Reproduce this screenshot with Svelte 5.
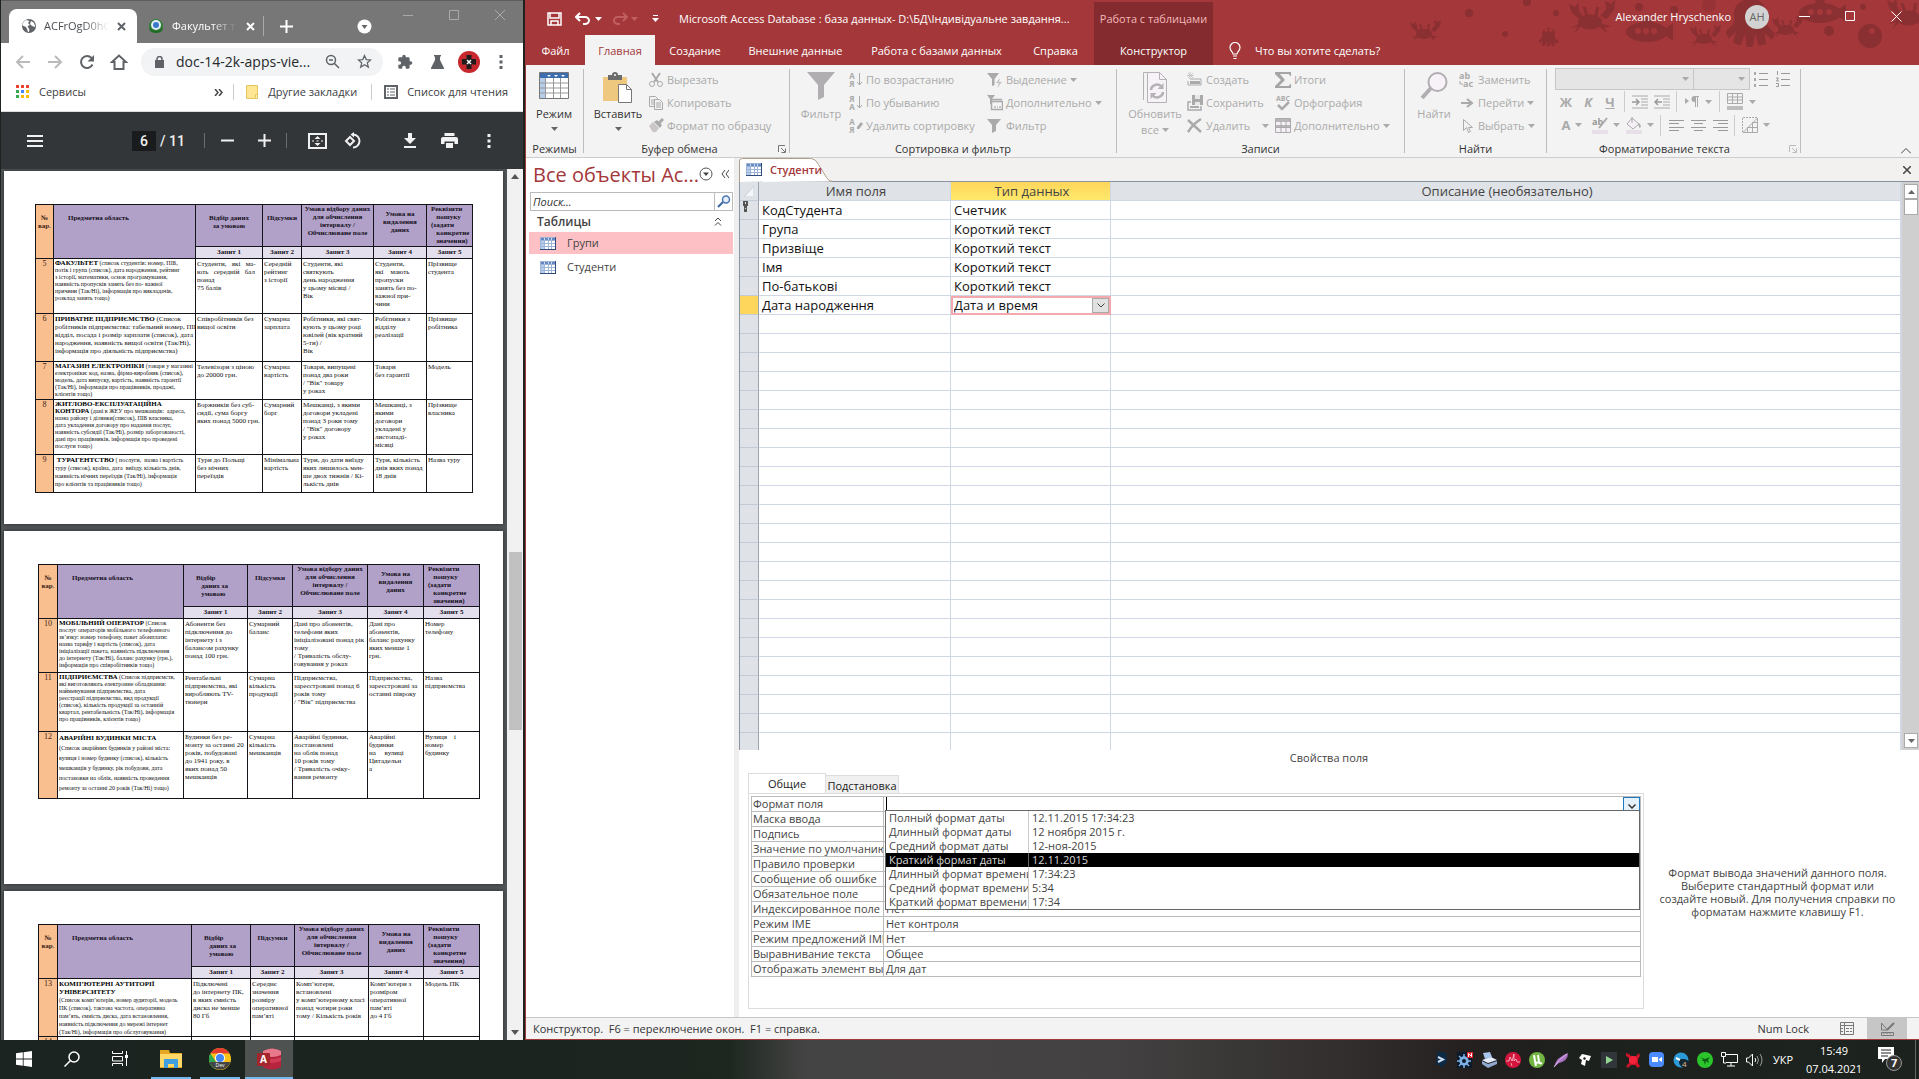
<script>
  const heads = [
    { a: ['Відбір даних', 'за умовою'], left: false },
    { a: ['Відбір', '   даних за', '   умовою'], left: true }
  ];
  const requisites = ['Реквізити', '   пошуку', '(задати', '   конкретне', '   значення)'];

  const pages = [
    {
      cols: [18, 142, 67, 39, 72, 53, 46],
      head: heads[0],
      rows: [
        {
          n: '5', h: 55, pitch: 'p7', title: 'ФАКУЛЬТЕТ', first: '(список студентів: номер, ПІБ,',
          desc: ['потік і група (список), дата народження, рейтинг', 'з історії, математики, основ програмування,', 'наявність пропусків занять без по- важної', 'причини (Так/Ні), інформація про викладачів,', 'розклад занять тощо)'],
          cells: [['Студенти,   які   ма-', 'ють   середній   бал', 'понад', '75 балів'], ['Середній', 'рейтинг', 'з історії'], ['Студенти, які', 'святкують', 'день народження', 'у цьому місяці /', 'Вік'], ['Студенти,', 'які    мають', 'пропуски', 'занять без по-', 'важної при-', 'чини'], ['Прізвище', 'студента']]
        },
        {
          n: '6', h: 48, pitch: 'p8', title: 'ПРИВАТНЕ ПІДПРИЄМСТВО', first: '(Список',
          desc: ['робітників підприємства: табельний номер, ПІБ,', 'відділ, посада і розмір зарплати (список), дата', 'народження, наявність вищої освіти (Так/Ні),', 'інформація про діяльність підприємства)'],
          cells: [['Співробітників без', 'вищої освіти'], ['Сумарна', 'зарплата'], ['Робітники, які свят-', 'кують у цьому році', 'ювілей (вік кратний', '5-ти) /', 'Вік'], ['Робітники з', 'відділу', 'реалізації'], ['Прізвище', 'робітника']]
        },
        {
          n: '7', h: 38, pitch: 'p7', title: 'МАГАЗИН ЕЛЕКТРОНІКИ', first: '(товари у магазині',
          desc: ['електроніки: код, назва, фірма-виробник (список),', 'модель, дата випуску, вартість, наявність гарантії', '(Так/Ні), інформація про працівників, продажі,', 'клієнтів тощо)'],
          cells: [['Телевізори з ціною', 'до 20000 грн.'], ['Сумарна', 'вартість'], ['Товари, випущені', 'понад два роки', '/ "Вік" товару', 'у роках'], ['Товари', 'без гарантії'], ['Модель']]
        },
        {
          n: '8', h: 55, pitch: 'p7', title: 'ЖИТЛОВО-ЕКСПЛУАТАЦІЙНА', first: '', title2: 'КОНТОРА', first2: '(дані в ЖЕУ про мешканців:  адреса,',
          desc: ['назва району і ділянки(список), ПІБ власника,', 'дата укладення договору про надання послуг,', 'наявність субсидії (Так/Ні), розмір заборгованості,', 'дані про працівників, інформація про проведені', 'послуги тощо)'],
          cells: [['Боржників без суб-', 'сидії, сума боргу', 'яких понад 5000 грн.'], ['Сумарний', 'борг'], ['Мешканці, з якими', 'договори укладені', 'понад 3 роки тому', '/ "Вік" договору', 'у роках'], ['Мешканці, з', 'якими', 'договори', 'укладені у', 'листопаді-', 'місяці'], ['Прізвище', 'власника']]
        },
        {
          n: '9', h: 38, pitch: 'p8', small: true, title: ' ТУРАГЕНТСТВО', first: '( послуги,  назва і вартість',
          desc: ['туру (список), країна, дата  виїзду, кількість днів,', 'наявність нічних переїздів (Так/Ні), інформація', 'про клієнтів та працівників тощо)'],
          cells: [['Тури до Польщі', 'без нічних', 'переїздів'], ['Мінімальна', 'вартість'], ['Тури, до дати виїзду', 'яких лишилось мен-', 'ше двох тижнів / Кі-', 'лькість днів'], ['Тури, кількість', 'днів яких понад', '18 днів'], ['Назва туру']]
        }
      ]
    },
    {
      cols: [19, 126, 64, 45, 75, 56, 56],
      head: heads[1],
      rows: [
        {
          n: '10', h: 54, pitch: 'p7', title: 'МОБІЛЬНИЙ ОПЕРАТОР', first: '(Список',
          desc: ['послуг операторів мобільного телефонного', 'зв’язку: номер телефону, пакет абонплати:', 'назва тарифу і вартість (список), дата', 'ініціалізації пакета, наявність підключення', 'до інтернету (Так/Ні), баланс рахунку (грн.),', 'інформація про співробітників тощо)'],
          cells: [['Абоненти без', 'підключення до', 'інтернету і з', 'балансом рахунку', 'понад 100 грн.'], ['Сумарний', 'баланс'], ['Дані про абонентів,', 'телефони яких', 'ініціалізовані понад рік', 'тому', '/ Тривалість обслу-', 'говування у роках'], ['Дані про', 'абонентів,', 'баланс рахунку', 'яких менше 1', 'грн.'], ['Номер', 'телефону']]
        },
        {
          n: '11', h: 59, pitch: 'p7', title: 'ПІДПРИЄМСТВА', first: '(Список підприємств,',
          desc: ['які виготовляють електронне обладнання:', 'найменування підприємства, дата', 'реєстрації підприємства, вид продукції', '(список), кількість продукції за останній', 'квартал, рентабельність (Так/Ні), інформація', 'про працівників, клієнтів тощо)'],
          cells: [['Рентабельні', 'підприємства, які', 'виробляють TV-', 'тюнери'], ['Сумарна', 'кількість', 'продукції'], ['Підприємства,', 'зареєстровані понад 6', 'років тому', '/ "Вік" підприємства'], ['Підприємства,', 'зареєстровані за', 'останні півроку'], ['Назва', 'підприємства']]
        },
        {
          n: '12', h: 67, pitch: 'p9', title: 'АВАРІЙНІ БУДИНКИ МІСТА', first: '',
          desc: ['(Список аварійних будинків у районі міста:', 'вулиця і номер будинку (список), кількість', 'мешканців у будинку, рік побудови, дата', 'постановки на облік, наявність проведення', 'ремонту за останні 20 років (Так/Ні) тощо)'],
          cells: [['Будинки без ре-', 'монту за останні 20', 'років, побудовані', 'до 1941 року, в', 'яких понад 50', 'мешканців'], ['Сумарна', 'кількість', 'мешканців'], ['Аварійні будинки,', 'постановлені', 'на облік понад', '10 років тому', '/ Тривалість очіку-', 'вання ремонту'], ['Аварійні', 'будинки', 'на     вулиці', 'Цитадельн', 'а'], ['Вулиця    і', 'номер', 'будинку']]
        }
      ]
    },
    {
      cols: [19, 134, 59, 44, 74, 55, 56],
      head: heads[1],
      rows: [
        {
          n: '13', h: 58, pitch: 'p8', small: true, title: 'КОМП’ЮТЕРНІ АУТИТОРІЇ', first: '', title2: 'УНІВЕРСИТЕТУ', first2: '',
          desc: ['(Список комп’ютерів, номер аудиторії, модель', 'ПК (список), тактова частота, оперативна', 'пам’ять, ємність диска, дата встановлення,', 'наявність підключення до мережі інтернет', '(Так/Ні), інформація про обслуговування)'],
          cells: [['Підключені', 'до інтернету ПК,', 'в яких ємність', 'диска не менше', '80 Гб'], ['Середнє', 'значення', 'розміру', 'оперативної', 'пам’яті'], ['Комп’ютери,', 'встановлені', 'у комп’ютерному класі', 'понад чотири роки', 'тому / Кількість років'], ['Комп’ютери з', 'розміром', 'оперативної', 'пам’яті', 'до 4 Гб'], ['Модель ПК']]
        },
        { n: '14', h: 50, pitch: 'p8', title: 'БІБЛІОТЕКА', first: '(Список книг,', desc: [], cells: [['Книги, які'], ['Середня'], ['Книги, видані'], ['Книги, які'], ['Назва']] }
      ]
    }
  ];

  const fields = [
    ['КодСтудента', 'Счетчик'],
    ['Група', 'Короткий текст'],
    ['Призвіще', 'Короткий текст'],
    ['Імя', 'Короткий текст'],
    ['По-батькові', 'Короткий текст'],
    ['Дата народження', 'Дата и время']
  ];
  const blanks = Array.from({ length: 24 });

  const props = [
    ['Маска ввода', ''],
    ['Подпись', ''],
    ['Значение по умолчанию', ''],
    ['Правило проверки', ''],
    ['Сообщение об ошибке', ''],
    ['Обязательное поле', 'Нет'],
    ['Индексированное поле', 'Нет'],
    ['Режим IME', 'Нет контроля'],
    ['Режим предложений IME', 'Нет'],
    ['Выравнивание текста', 'Общее'],
    ['Отображать элемент выбора', 'Для дат']
  ];
  const formats = [
    ['Полный формат даты', '12.11.2015 17:34:23'],
    ['Длинный формат даты', '12 ноября 2015 г.'],
    ['Средний формат даты', '12-ноя-2015'],
    ['Краткий формат даты', '12.11.2015'],
    ['Длинный формат времени', '17:34:23'],
    ['Средний формат времени', '5:34'],
    ['Краткий формат времени', '17:34']
  ];
  let chosen = $state(3);
  let typeValue = $state('Дата и время');
</script>

{#snippet caret()}
  <svg class="caret" width="7" height="4" viewBox="0 0 7 4"><path d="M0 0h7L3.500 4z" fill="currentColor" /></svg>
{/snippet}

{#snippet sheet()}
  <svg width="16" height="13" viewBox="0 0 16 13">
    <path d="M0 0h15v12H0z" fill="#9db4d6" />
    <path d="M15 0h1v13H0v-1h15z" fill="#2f4c7c" />
    <path d="M1 1h14v2H1z" fill="#6488c4" />
    <path d="M1 4h3v2H1zM1 7h3v2H1zM1 10h3v2H1z" fill="#b9cdec" />
    <path d="M5 4h3v2H5zM9 4h2v2H9zM12 4h3v2h-3zM5 7h3v2H5zM9 7h2v2H9zM12 7h3v2h-3zM5 10h3v2H5zM9 10h2v2H9zM12 10h3v2h-3z" fill="#fff" />
    <path d="M4 1h1v2H4zM8 1h1v2H8zM11 1h1v2h-1z" fill="#cfdcf2" />
  </svg>
{/snippet}

{#snippet docTable(p)}
  <table class="doc">
    <colgroup>{#each p.cols as w}<col style:width="{w}px" />{/each}</colgroup>
    <thead>
      <tr class="h1">
        <th rowspan="2" class="num low">№<br />вар.</th>
        <th rowspan="2" class="subj low">Предметна область</th>
        <th class="low" class:left={p.head.left}>{#each p.head.a as l}<span class="ln">{l}</span>{/each}</th>
        <th class="low">Підсумки</th>
        <th>Умова відбору даних<br />для обчислення<br />інтервалу /<br />Обчислюване поле</th>
        <th class="mid">Умова на<br />видалення<br />даних</th>
        <th class="left">{#each requisites as l}<span class="ln">{l}</span>{/each}</th>
      </tr>
      <tr class="h2">{#each [1, 2, 3, 4, 5] as q}<th>Запит {q}</th>{/each}</tr>
    </thead>
    <tbody>
      {#each p.rows as r}
        <tr style:height="{r.h}px">
          <td class="num">{r.n}</td>
          <td class="desc {r.pitch}" class:small={r.small}>
            <span class="ln"><b>{r.title}</b> {r.first}</span>
            {#if r.title2}<span class="ln"><b>{r.title2}</b> {r.first2}</span>{/if}
            {#each r.desc as l}<span class="ln">{l}</span>{/each}
          </td>
          {#each r.cells as c}<td>{#each c as l}<span class="ln">{l}</span>{/each}</td>{/each}
        </tr>
      {/each}
    </tbody>
  </table>
{/snippet}

<div class="desktop">
  <!-- Browser -->
  <section class="browser">
    <div class="tabstrip">
      <div class="tab on">
        <svg width="16" height="16" viewBox="0 0 16 16"><circle cx="8" cy="8" r="7" fill="#5f6368" /><path d="M5 2c-2 1-3.500 3-3.500 5.500L5 9l1 2 1 3c1 .5 1-1 1.500-2L6.500 8 9 7 7 5l1.500-2zM10 3l-1 3 2 2 3 1c0-3-1-5-4-6z" fill="#fff" /></svg>
        <span class="ttl">ACFrOgD0hQ</span>
        <button aria-label="Закрыть вкладку"><svg width="9" height="9" viewBox="0 0 9 9"><path d="M1 1l7 7M8 1L1 8" stroke="#5f6368" stroke-width="2" /></svg></button>
      </div>
      <div class="tab off">
        <svg width="16" height="16" viewBox="0 0 16 16"><circle cx="8" cy="8" r="7" fill="#2e7d32" /><circle cx="8" cy="7" r="5" fill="#e3eefb" /><circle cx="8" cy="7" r="3" fill="#3c78c8" /><path d="M1 10q7 6 14 0l-1 3q-6 4-12 0z" fill="#1f6a26" /></svg>
        <span class="ttl">Факультет т</span>
        <button aria-label="Закрыть вкладку"><svg width="9" height="9" viewBox="0 0 9 9"><path d="M1 1l7 7M8 1L1 8" stroke="#fff" stroke-width="2" /></svg></button>
      </div>
      <button class="plus" aria-label="Новая вкладка"><svg width="13" height="13" viewBox="0 0 13 13"><path d="M6.500 0v13M0 6.500h13" stroke="#fff" stroke-width="2" /></svg></button>
      <button class="media" aria-label="Поиск вкладок"><svg width="15" height="15" viewBox="0 0 15 15"><circle cx="7.500" cy="7.500" r="7" fill="#fff" /><path d="M4.500 6h6l-3 4z" fill="#666" /></svg></button>
      <div class="wins">
        <button aria-label="Свернуть"><svg width="11" height="11" viewBox="0 0 11 11"><path d="M0 5.500h10" stroke="#aaa" /></svg></button>
        <button aria-label="Развернуть"><svg width="11" height="11" viewBox="0 0 11 11"><path d="M.5.500h9v9h-9z" stroke="#aaa" fill="none" /></svg></button>
        <button aria-label="Закрыть"><svg width="11" height="11" viewBox="0 0 11 11"><path d="M0 0l10 10M10 0L0 10" stroke="#aaa" /></svg></button>
      </div>
    </div>

    <div class="navbar">
      <button aria-label="Назад"><svg width="16" height="16" viewBox="0 0 16 16"><path d="M15 8H2M8 2L2 8l6 6" stroke="#bbb" stroke-width="2" fill="none" /></svg></button>
      <button aria-label="Вперёд"><svg width="16" height="16" viewBox="0 0 16 16"><path d="M1 8h13M8 2l6 6-6 6" stroke="#bbb" stroke-width="2" fill="none" /></svg></button>
      <button aria-label="Обновить"><svg width="16" height="16" viewBox="0 0 16 16"><path d="M13.500 10.500A6 6 0 1 1 12.500 4" stroke="#5f6368" stroke-width="2" fill="none" /><path d="M15 1v6.500H8.500z" fill="#5f6368" /></svg></button>
      <button aria-label="Домой"><svg width="18" height="16" viewBox="0 0 18 16"><path d="M2 8l7-6.500L16 8h-2.500v7h-9V8z" stroke="#5f6368" stroke-width="2" fill="none" /></svg></button>
      <div class="omni">
        <svg width="9" height="12" viewBox="0 0 9 12"><path d="M0 4h9v8H0z" fill="#5f6368" /><path d="M2 5V3a2.500 2.500 0 0 1 5 0v2" stroke="#5f6368" stroke-width="1.500" fill="none" /></svg>
        <input aria-label="Адрес" value="doc-14-2k-apps-vie..." />
        <svg width="15" height="15" viewBox="0 0 15 15"><circle cx="6" cy="6" r="4.500" stroke="#5f6368" stroke-width="1.500" fill="none" /><path d="M4 6h4M9.500 9.500L14 14" stroke="#5f6368" stroke-width="1.500" /></svg>
        <svg width="15" height="15" viewBox="0 0 24 24"><path d="M12 2.500l2.800 6.400 7 .6-5.300 4.600 1.600 6.900-6.100-3.700L5.900 21l1.600-6.900L2.200 9.500l7-.6z" stroke="#5f6368" stroke-width="2" fill="none" /></svg>
      </div>
      <button class="ext" aria-label="Расширения"><svg width="16" height="16" viewBox="0 0 24 24"><path d="M20.500 11H19V7a2 2 0 0 0-2-2h-4V3.500a2.500 2.500 0 0 0-5 0V5H4a2 2 0 0 0-2 2v3.800h1.500a2.700 2.700 0 0 1 0 5.400H2V20a2 2 0 0 0 2 2h3.800v-1.500a2.700 2.700 0 0 1 5.400 0V22H17a2 2 0 0 0 2-2v-4h1.500a2.500 2.500 0 0 0 0-5z" fill="#5f6368" /></svg></button>
      <button aria-label="Эксперименты"><svg width="13" height="14" viewBox="0 0 13 14"><path d="M3 0h7v1.500H9V5l4 8v1H0v-1l4-8V1.500H3z" fill="#5f6368" /></svg></button>
      <button aria-label="Профиль"><svg width="22" height="22" viewBox="0 0 22 22"><circle cx="11" cy="11" r="11" fill="#c6282e" /><path d="M8.500 4h5v4H18v5.500h-4.500V18h-5v-4.500H4V8h4.500z" fill="#221b1c" /><path d="M9 9l4 4M13 9l-4 4" stroke="#fff" stroke-width="1.500" /></svg></button>
      <button aria-label="Меню"><svg width="4" height="14" viewBox="0 0 4 14"><path d="M.5 0h3v3h-3zM.5 5.500h3v3h-3zM.5 11h3v3h-3z" fill="#5f6368" /></svg></button>
    </div>

    <div class="marks">
      <a href="#apps"><svg width="14" height="14" viewBox="0 0 14 14"><path d="M0 0h3v3H0zM5 0h3v3H5zM10 0h3v3h-3z" fill="#ea4335" /><path d="M0 5h3v3H0zM0 10h3v3H0z" fill="#34a853" /><path d="M5 5h3v3H5z" fill="#4285f4" /><path d="M10 5h3v3h-3zM5 10h3v3H5zM10 10h3v3h-3z" fill="#fbbc05" /></svg>Сервисы</a>
      <button class="more" aria-label="Ещё закладки"><svg width="9" height="7" viewBox="0 0 9 7"><path d="M1 0l3 3.500L1 7M5 0l3 3.500L5 7" stroke="#444" stroke-width="1.500" fill="none" /></svg></button>
      <i></i>
      <a class="other" href="#other"><svg width="13" height="14" viewBox="0 0 13 14"><path d="M.5.500h11v13H.5z" fill="#ffe694" stroke="#e8c55a" /><path d="M9.500 9.500h2v4h-2z" fill="#fff3c4" stroke="#e8c55a" /></svg>Другие закладки</a>
      <i></i>
      <a href="#reading"><svg width="14" height="14" viewBox="0 0 14 14"><path d="M1 1h12v12H1z" stroke="#5f6368" stroke-width="2" fill="none" /><path d="M3 4h2M6 4h5M3 7h2M6 7h5M3 10h2M6 10h5" stroke="#5f6368" /></svg>Список для чтения</a>
    </div>

    <div class="pdfbar">
      <button aria-label="Оглавление"><svg width="16" height="12" viewBox="0 0 16 12"><path d="M0 1h16M0 6h16M0 11h16" stroke="#f1f1f1" stroke-width="2" /></svg></button>
      <label class="pg"><input aria-label="Страница" value="6" /><span>/ 11</span></label>
      <i></i>
      <button aria-label="Уменьшить"><svg width="13" height="13" viewBox="0 0 13 13"><path d="M0 6.500h13" stroke="#f1f1f1" stroke-width="2" /></svg></button>
      <button class="zin" aria-label="Увеличить"><svg width="13" height="13" viewBox="0 0 13 13"><path d="M0 6.500h13M6.500 0v13" stroke="#f1f1f1" stroke-width="2" /></svg></button>
      <i></i>
      <button class="fit" aria-label="По размеру"><svg width="19" height="16" viewBox="0 0 19 16"><path d="M1 1h17v14H1z" stroke="#f1f1f1" stroke-width="2" fill="none" /><path d="M9.500 3l3 3h-6zM9.500 13l3-3h-6zM4 7.500h2v1H4zM13 7.500h2v1h-2zM8.500 7.500h2v1h-2z" fill="#f1f1f1" /></svg></button>
      <button class="rot" aria-label="Повернуть"><svg width="18" height="18" viewBox="0 0 18 18"><path d="M6 5l4 4-4 4-4-4z" stroke="#f1f1f1" stroke-width="2" fill="none" /><path d="M9 2.500a6.500 6.500 0 1 1 0 13" stroke="#f1f1f1" stroke-width="2" fill="none" /><path d="M10 0v5.500L6.500 2.500z" fill="#f1f1f1" /></svg></button>
      <button class="dl" aria-label="Скачать"><svg width="12" height="15" viewBox="0 0 12 15"><path d="M4 0h4v5h4l-6 6-6-6h4zM0 13h12v2H0z" fill="#f1f1f1" /></svg></button>
      <button aria-label="Печать"><svg width="17" height="15" viewBox="0 0 17 15"><path d="M3.500 0h10v3h-10zM2 4h13q2 0 2 2v5h-3.500V8.500h-10V11H0V6q0-2 2-2zM5 10h7v5H5z" fill="#f1f1f1" /></svg></button>
      <button aria-label="Ещё"><svg width="4" height="14" viewBox="0 0 4 14"><path d="M.5 0h3v3h-3zM.5 5.500h3v3h-3zM.5 11h3v3h-3z" fill="#f1f1f1" /></svg></button>
    </div>

    <div class="viewer">
      <div class="pages">
        {#each pages as p, i}
          <article class="page" class:first={i === 0}>{@render docTable(p)}</article>
        {/each}
      </div>
      <div class="vbar">
        <svg width="8" height="5" viewBox="0 0 8 5"><path d="M4 0l4 5H0z" fill="#555" /></svg>
        <div class="track"><div class="thumb"></div></div>
        <svg width="8" height="5" viewBox="0 0 8 5"><path d="M4 5l4-5H0z" fill="#555" /></svg>
      </div>
    </div>
  </section>

  <!-- Database -->
  <section class="access">
    <header>
      <svg class="sea" width="520" height="50" viewBox="1399 0 520 50" fill="#8a2f32">
        <defs>
          <g id="crab"><ellipse cx="0" cy="4" rx="8" ry="5" /><path d="M-7 2l-5-4-2-6 4 2 2-3 1 6 3 4zM7 0l4-5-1-5 4 2 3-3-1 7-5 6zM-7 5l-6 3 5-1-3 5 5-5zM7 5l7 2-5 1 4 4-6-4zM-3 0l-2-6h2l2 6zM3 0l1-6h2L5 1z" /></g>
          <g id="squid"><path d="M0-14c8 0 11 6 9 13 0 5 5 6 7 11l-2 3-5-4 1 7-5 1-2-8-2 9h-4l-1-9-3 8-5-2 2-7-5 4-2-4c3-4 6-4 6-9-2-7 3-13 11-13z" /></g>
          <g id="sub"><ellipse cx="0" cy="0" rx="21" ry="10" /><path d="M18-3l8-6v18l-8-6zM-5-8l1-7h8l1 7z" /></g>
        </defs>
        <use href="#crab" x="1424" y="30" /><circle cx="1469" cy="13" r="4" /><circle cx="1505" cy="34" r="3" /><circle cx="1527" cy="2" r="4" /><circle cx="1556" cy="13" r="3" />
        <use href="#squid" transform="translate(1549 36) scale(.6)" />
        <use href="#crab" transform="translate(1590 16) scale(1.500)" />
        <use href="#sub" x="1647" y="32" /><circle cx="1639" cy="7" r="4" /><circle cx="1674" cy="10" r="4" />
        <use href="#crab" x="1704" y="35" /><circle cx="1709" cy="5" r="7" opacity=".5" />
        <use href="#squid" transform="translate(1751 20) scale(1.500)" />
        <use href="#crab" x="1786" y="26" /><use href="#sub" x="1820" y="13" /><circle cx="1829" cy="31" r="5" /><circle cx="1863" cy="7" r="3" /><circle cx="1870" cy="36" r="12" /><use href="#crab" transform="translate(1908 12) scale(1.500)" />
        <g fill="#a4373a"><circle cx="1638" cy="31" r="3" /><circle cx="1646" cy="31" r="3" /><circle cx="1654" cy="31" r="3" /><circle cx="1811" cy="12" r="3" /><circle cx="1820" cy="12" r="3" /><circle cx="1829" cy="12" r="3" /><circle cx="1546" cy="30" r="2" /><circle cx="1551" cy="30" r="2" /><circle cx="1872" cy="31" r="3" /></g>
      </svg>
      <div class="titlerow">
        <div class="qat">
          <button class="save" aria-label="Сохранить"><svg width="15" height="14" viewBox="0 0 15 14"><path d="M1 1h13v12H1zM3 1v5h9V1M4 13V9h7v4" stroke="#fff" stroke-width="1.500" fill="none" /></svg></button>
          <button aria-label="Отменить"><svg width="16" height="13" viewBox="0 0 16 13"><path d="M1 5h9a4 3.500 0 0 1 0 7H8M5 1L1 5l4 4" stroke="#fff" stroke-width="2" fill="none" /></svg></button>
          <span class="wh">{@render caret()}</span>
          <button class="redo" aria-label="Вернуть"><svg width="16" height="13" viewBox="0 0 16 13"><path d="M15 5H6a4 3.500 0 0 0 0 7h2M11 1l4 4-4 4" stroke="#c05f61" stroke-width="2" fill="none" /></svg></button>
          <span class="dim">{@render caret()}</span>
          <button class="cust" aria-label="Настройка"><svg width="7" height="7" viewBox="0 0 7 7"><path d="M1 .5h5" stroke="#fff" /><path d="M0 3h7L3.500 7z" fill="#fff" /></svg></button>
          <span class="wt">Microsoft Access Database : база данных- D:\БД\Індивідуальне завдання...</span>
        </div>
        <div class="ctx">Работа с таблицами</div>
        <div class="acct"><span>Alexander Hryschenko</span><b>AH</b></div>
        <div class="awins">
          <button aria-label="Свернуть"><svg width="11" height="11" viewBox="0 0 11 11"><path d="M0 5.500h11" stroke="#fff" /></svg></button>
          <button aria-label="Развернуть"><svg width="11" height="11" viewBox="0 0 11 11"><path d="M.5.500h9v9h-9z" stroke="#fff" fill="none" /></svg></button>
          <button aria-label="Закрыть"><svg width="11" height="11" viewBox="0 0 11 11"><path d="M.5.500l10 10M10.500.500l-10 10" stroke="#fff" /></svg></button>
        </div>
      </div>
      <nav class="tabs">
        <button class="t1">Файл</button><button class="t2 on">Главная</button><button class="t3">Создание</button><button class="t4">Внешние данные</button><button class="t5">Работа с базами данных</button><button class="t6">Справка</button><button class="t7">Конструктор</button>
        <button class="tell"><svg width="12" height="18" viewBox="0 0 12 18"><path d="M4 12c0-2-3-3-3-6.500a5 5 0 0 1 10 0C11 9 8 10 8 12zM4 14h4M4.500 16.500h3" stroke="#fff" fill="none" stroke-width="1.200" /></svg>Что вы хотите сделать?</button>
      </nav>
    </header>

    <div class="ribbon">
      <div class="grp g1">
        <div class="gb">
          <button class="big dark"><span class="ic"><svg width="30" height="27" viewBox="0 0 30 27"><path d="M.5.500h29v26H.5z" fill="#fff" stroke="#777" /><path d="M1 1h28v5H1z" fill="#3d6fb0" /><path d="M1 6h5v20H1z" fill="#b5cde8" /><path d="M8 3h4l-2 2zM15 3h4l-2 2zM22 3h4l-2 2z" fill="#fff" /><path d="M1 11h28M1 16h28M1 21h28M6.500 6v20M14.500 6v20M21.500 6v20" stroke="#999" /></svg></span><span>Режим</span>{@render caret()}</button>
        </div>
        <div class="gl">Режимы</div>
      </div>
      <div class="sep"></div>
      <div class="grp g2">
        <div class="gb">
          <button class="big dark"><span class="ic"><svg width="30" height="31" viewBox="0 0 30 31"><path d="M0 5h24v24H0z" fill="#edc87e" /><path d="M5 3h4a3 3 0 0 1 6 0h4v5H5z" fill="#6b6b6b" /><circle cx="12" cy="3" r="1" fill="#fff" /><path d="M15.500 12.500h8l5 5v13h-13z" fill="#fff" stroke="#777" /><path d="M23.500 12.500v5h5" fill="none" stroke="#777" /></svg></span><span>Вставить</span>{@render caret()}</button>
          <div class="stack">
            <button><svg width="16" height="16" viewBox="0 0 16 16"><path d="M4 1l6 9M12 1L6 10" stroke="#aaa" stroke-width="2" /><circle cx="4" cy="12" r="2.500" stroke="#aaa" fill="none" /><circle cx="12" cy="12" r="2.500" stroke="#aaa" fill="none" /></svg>Вырезать</button>
            <button><svg width="16" height="16" viewBox="0 0 16 16"><path d="M1.500 1.500h6l2 2v8h-8zM3 5h4M3 7h4M3 9h3" stroke="#aaa" fill="none" /><path d="M6.500 4.500h5l3 3v7h-8z" stroke="#aaa" fill="#f3f0f3" /><path d="M8 8h5M8 10h5M8 12h5" stroke="#aaa" /></svg>Копировать</button>
            <button><svg width="16" height="16" viewBox="0 0 16 16"><path d="M1 8l4-4 6 6-3 4q-3 1-4-1z" fill="#c9c5c9" /><path d="M6 4l6 6 2-3-5-5z" fill="#aaa" /><path d="M11 5l4-4" stroke="#aaa" stroke-width="3" /></svg>Формат по образцу</button>
          </div>
        </div>
        <div class="gl">Буфер обмена<svg class="launch" width="8" height="8" viewBox="0 0 8 8"><path d="M.5 7V.5H7M3 3l4 4M7.500 3.500v4h-4" stroke="#777" fill="none" /></svg></div>
      </div>
      <div class="sep"></div>
      <div class="grp g3">
        <div class="gb">
          <button class="big"><span class="ic"><svg width="28" height="28" viewBox="0 0 28 28"><path d="M0 0h28L17 13v12l-6 3V13z" fill="#b1aeb1" /></svg></span><span>Фильтр</span></button>
          <div class="stack s1">
            <button><span class="az"><span>А</span><span>Я</span></span><svg class="dn" width="7" height="13" viewBox="0 0 7 13"><path d="M3.500 0v12M1 9l2.500 3L6 9" stroke="#aaa" fill="none" /></svg>По возрастанию</button>
            <button><span class="az"><span>Я</span><span>А</span></span><svg class="dn" width="7" height="13" viewBox="0 0 7 13"><path d="M3.500 0v12M1 9l2.500 3L6 9" stroke="#aaa" fill="none" /></svg>По убыванию</button>
            <button><span class="az"><span>А</span><span>Я</span></span><svg class="dn" width="7" height="9" viewBox="0 0 7 9"><path d="M1 6l4-5 2 2-4 5H1z" fill="#aaa" /></svg>Удалить сортировку</button>
          </div>
          <div class="stack">
            <button><svg width="16" height="16" viewBox="0 0 16 16"><path d="M0 1h12L7.500 7v6L5 14V7z" fill="#aaa" /><path d="M13 6l-4 5h3l-2 5 5-6h-3z" fill="#c5c0c5" /></svg>Выделение {@render caret()}</button>
            <button><svg width="16" height="16" viewBox="0 0 16 16"><path d="M0 0h8L5 4v5H3V4z" fill="#aaa" /><path d="M4.500 6.500h11v8h-11zM5 4.500h10" stroke="#aaa" fill="none" stroke-width="1.500" /><path d="M7 12h2M10 12h1M12 12h2" stroke="#999" /></svg>Дополнительно {@render caret()}</button>
            <button><svg width="16" height="16" viewBox="0 0 16 16"><path d="M0 1h14L9 7v6l-4 2V7z" fill="#aaa" /></svg>Фильтр</button>
          </div>
        </div>
        <div class="gl">Сортировка и фильтр</div>
      </div>
      <div class="sep"></div>
      <div class="grp g4">
        <div class="gb">
          <button class="big"><span class="ic"><svg width="24" height="31" viewBox="0 0 24 31"><path d="M.5 28V.5H13" stroke="#b5b2b5" fill="none" /><path d="M4.500.500h12l7 7v23h-19z" stroke="#b5b2b5" fill="#f7f2f8" /><path d="M16.500.500v7h7" stroke="#b5b2b5" fill="none" /><path d="M8 18a6 5.500 0 0 1 10-4M20 20a6 5.500 0 0 1-10 4" stroke="#b5b2b5" stroke-width="2.500" fill="none" /><path d="M20.500 11v6h-6zM7.500 27v-6h6z" fill="#b5b2b5" /></svg></span><span>Обновить</span><span>все {@render caret()}</span></button>
          <div class="stack s3">
            <button><svg width="16" height="16" viewBox="0 0 16 16"><path d="M3 0v7M0 3.500h7M1 1l5 5M6 1L1 6" stroke="#c8c8c8" /><path d="M3 7h11v6H1V9" stroke="#aaa" fill="none" /><path d="M3 9h10v3H3z" fill="#aaa" /></svg>Создать</button>
            <button><svg width="16" height="16" viewBox="0 0 16 16"><path d="M5 0h11v10H5z" fill="#aaa" /><path d="M8 0h5v4H8zM8 7h5v3H8z" fill="#e9e6e9" /><path d="M4 7H1v8h13v-4" stroke="#aaa" fill="none" stroke-width="1.500" /><path d="M3 11h9v2H3z" fill="#aaa" /></svg>Сохранить</button>
            <button class="del"><svg width="16" height="16" viewBox="0 0 16 16"><path d="M1 2l13 12M14 1Q6 6 1 14" stroke="#aaa" stroke-width="2.500" fill="none" /></svg>Удалить <span class="gap"></span>{@render caret()}</button>
          </div>
          <div class="stack">
            <button><svg width="16" height="16" viewBox="0 0 16 16"><path d="M0 0h16v4h-1l-1-2H5l5 6-6 6h10l1-2h1v4H0v-2l6-6-6-6z" fill="#a5a5a5" /></svg>Итоги</button>
            <button><svg width="16" height="16" viewBox="0 0 16 16"><text x="1" y="6" font-size="7" font-weight="700" fill="#aaa">ABC</text><path d="M3 10l4 4 7-7" stroke="#aaa" stroke-width="2.500" fill="none" /></svg>Орфография</button>
            <button><svg width="16" height="15" viewBox="0 0 16 15"><path d="M.5.500h15v14H.5z" fill="#f5f0f6" stroke="#aaa" /><path d="M1 1h14v3H1zM1 7h14v2H1z" fill="#b8b5b8" /><path d="M6 4v11M11 4v11M1 9.500h14" stroke="#aaa" /></svg>Дополнительно {@render caret()}</button>
          </div>
        </div>
        <div class="gl">Записи</div>
      </div>
      <div class="sep"></div>
      <div class="grp g5">
        <div class="gb">
          <button class="big"><span class="ic"><svg width="28" height="28" viewBox="0 0 28 28"><path d="M11 16L2 26" stroke="#b1aeb1" stroke-width="4" /><circle cx="17.500" cy="10" r="9" fill="#f7f2f8" stroke="#b1aeb1" stroke-width="2" /></svg></span><span>Найти</span></button>
          <div class="stack">
            <button><svg width="16" height="16" viewBox="0 0 16 16"><text x="0" y="7" font-size="9" font-weight="700" fill="#aaa">ab</text><text x="4" y="15" font-size="9" font-weight="700" fill="#aaa">ac</text><path d="M1 9v3h3" stroke="#aaa" fill="none" /></svg>Заменить</button>
            <button><svg width="16" height="16" viewBox="0 0 16 16"><path d="M2 8h11M8 4l5 4-5 4" stroke="#aaa" stroke-width="2" fill="none" /></svg>Перейти {@render caret()}</button>
            <button><svg width="16" height="16" viewBox="0 0 16 16"><path d="M4.500 1.500v11l3-3 2 5 2-1-2-4h4z" stroke="#aaa" fill="none" /></svg>Выбрать {@render caret()}</button>
          </div>
        </div>
        <div class="gl">Найти</div>
      </div>
      <div class="sep"></div>
      <div class="grp g6">
        <div class="fmt">
          <div class="fr">
            <button class="combo c1" aria-label="Шрифт">{@render caret()}</button><button class="combo c2" aria-label="Размер">{@render caret()}</button>
            <button class="w22" aria-label="Маркеры"><svg width="14" height="16" viewBox="0 0 14 16"><path d="M5 2.500h9M5 8.500h9M5 14.500h9" stroke="#999" /><path d="M0 1h2v3H0zM0 7h2v3H0zM0 13h2v3H0z" fill="#aaa" /></svg></button>
            <button class="w22" aria-label="Нумерация"><svg width="14" height="16" viewBox="0 0 14 16"><path d="M5 2.500h9M5 8.500h9M5 14.500h9" stroke="#999" /><path d="M1.500 0v4M0 7h2.500L.5 10h2.500M0 12.500h2.500v3H0" stroke="#999" fill="none" /></svg></button>
          </div>
          <div class="fr r2">
            <button class="w22 ch"><b>Ж</b></button><button class="w22 ch"><b><em>К</em></b></button><button class="w22 ch"><b><u>Ч</u></b></button>
            <i></i>
            <button class="w22" aria-label="Уменьшить отступ"><svg width="16" height="14" viewBox="0 0 16 14"><path d="M0 1h16M9 4h7M9 7h7M9 10h7M0 13h16" stroke="#aaa" /><path d="M0 7h7M4 4l3 3-3 3" stroke="#999" stroke-width="1.500" fill="none" /></svg></button>
            <button class="w22" aria-label="Увеличить отступ"><svg width="16" height="14" viewBox="0 0 16 14"><path d="M0 1h16M9 4h7M9 7h7M9 10h7M0 13h16" stroke="#aaa" /><path d="M1 7h7M4 4L1 7l3 3" stroke="#999" stroke-width="1.500" fill="none" /></svg></button>
            <i></i>
            <button class="w38" aria-label="Направление"><svg width="14" height="12" viewBox="0 0 14 12"><path d="M0 2l4 3-4 3zM9 0h5v1h-1v10h-1V1h-1v10h-1V6a3 3 0 0 1-1-6z" fill="#aaa" /></svg>{@render caret()}</button>
            <i></i>
            <button class="w38" aria-label="Сетка"><svg width="16" height="17" viewBox="0 0 16 17"><path d="M.5.500h15v10H.5zM0 4h16M0 7h16M5.500 0v10M10.500 0v10" stroke="#aaa" fill="none" /><path d="M0 13h16v4H0z" fill="#bdbdbd" /></svg>{@render caret()}</button>
          </div>
          <div class="fr r3">
            <button class="w34 ch"><b>А</b>{@render caret()}</button>
            <button class="w34" aria-label="Выделение цветом"><svg width="16" height="17" viewBox="0 0 16 17"><text x="0" y="8" font-size="9" font-weight="700" fill="#999">ab</text><path d="M15 1L7 11" stroke="#aaa" stroke-width="2" /><path d="M0 13h16v4H0z" fill="#e6dfe8" /></svg>{@render caret()}</button>
            <button class="w34" aria-label="Заливка"><svg width="16" height="17" viewBox="0 0 16 17"><path d="M6 1l7 6-6 5-6-5zM6 0v6" stroke="#aaa" fill="#f5f0f6" /><path d="M13 6q3 3 1 5-2-1-1-5z" fill="#aaa" /><path d="M0 13h16v4H0z" fill="#e6dfe8" /></svg>{@render caret()}</button>
            <i></i>
            <button class="w22" aria-label="По левому краю"><svg width="15" height="11" viewBox="0 0 15 11"><path d="M0 .5h15M0 3.500h10M0 7.500h15M0 10.500h10" stroke="#999" /></svg></button>
            <button class="w22" aria-label="По центру"><svg width="15" height="11" viewBox="0 0 15 11"><path d="M0 .5h15M3 3.500h9M0 7.500h15M3 10.500h9" stroke="#999" /></svg></button>
            <button class="w22" aria-label="По правому краю"><svg width="15" height="11" viewBox="0 0 15 11"><path d="M0 .5h15M5 3.500h10M0 7.500h15M5 10.500h10" stroke="#999" /></svg></button>
            <i></i>
            <button class="w34" aria-label="Фон строк"><svg width="16" height="16" viewBox="0 0 16 16"><path d="M.5 15V.5H15" stroke="#aaa" stroke-dasharray="2 1" fill="none" /><path d="M1 15.500h14.500V1zM5.500 11v4M10.500 6v9M5 10.500h10M10 5.500h5" stroke="#aaa" fill="none" /></svg>{@render caret()}</button>
          </div>
        </div>
        <div class="gl">Форматирование текста<svg class="launch" width="8" height="8" viewBox="0 0 8 8"><path d="M.5 7V.5H7M3 3l4 4M7.500 3.500v4h-4" stroke="#bbb" fill="none" /></svg></div>
      </div>
      <div class="sep"></div>
      <button class="fold" aria-label="Свернуть ленту"><svg width="10" height="6" viewBox="0 0 10 6"><path d="M0 5.500l5-5 5 5" stroke="#444" fill="none" /></svg></button>
    </div>

    <div class="work">
      <aside>
        <div class="ah"><h2>Все объекты Ac...</h2>
          <button aria-label="Выбор объектов"><svg width="14" height="14" viewBox="0 0 14 14"><circle cx="7" cy="7" r="6" stroke="#555" fill="none" /><path d="M4 5.500h6L7 9z" fill="#444" /></svg></button>
          <button aria-label="Скрыть"><svg width="8" height="8" viewBox="0 0 8 8"><path d="M4 0L1 4l3 4M8 0L5 4l3 4" stroke="#444" fill="none" /></svg></button>
        </div>
        <div class="find"><input aria-label="Поиск" placeholder="Поиск..." /><button aria-label="Искать"><svg width="14" height="13" viewBox="0 0 14 13"><circle cx="9" cy="4.500" r="3.500" stroke="#4a76b0" stroke-width="1.500" fill="#e8f0fa" /><path d="M6 7l-5 5" stroke="#3a66a0" stroke-width="2" /></svg></button></div>
        <div class="sect"><span>Таблицы</span><svg width="8" height="10" viewBox="0 0 8 10"><path d="M1 4l3-3 3 3M1 8.500l3-3 3 3" stroke="#444" fill="none" /></svg></div>
        <a class="obj on" href="#grupy">{@render sheet()}Групи</a>
        <a class="obj" href="#students">{@render sheet()}Студенти</a>
      </aside>
      <main>
        <div class="dtabs">
          <button class="dtab"><svg class="tabshape" width="96" height="24" viewBox="0 0 96 24"><path d="M.5 24V3q0-2.500 3-2.500h67q6 0 9 6l8 13q2 4 6 4" fill="#fff" stroke="#b09c8a" /></svg><span>{@render sheet()}<b>Студенти</b></span></button>
          <button class="dx" aria-label="Закрыть таблицу"><svg width="8" height="8" viewBox="0 0 8 8"><path d="M0 0l8 8M8 0L0 8" stroke="#444" stroke-width="1.500" /></svg></button>
        </div>
        <div class="design">
          <div class="gridwrap">
            <table class="grid">
              <colgroup><col class="k0" /><col class="k1" /><col class="k2" /><col /></colgroup>
              <thead><tr><th class="rs" aria-label="Выделить всё"><svg width="10" height="11" viewBox="0 0 10 11"><path d="M10 0v11H0z" fill="#f4f7fa" stroke="#c5ced9" /></svg></th><th>Имя поля</th><th class="act">Тип данных</th><th>Описание (необязательно)</th></tr></thead>
              <tbody>
                {#each fields as f, i}
                  <tr>
                    <td class="rs" class:cur={i === 5}>{#if i === 0}<svg width="7" height="11" viewBox="0 0 7 11"><path d="M1 0h5v5H5v6H2V5H1z" fill="#555" /><path d="M3 1h1v2H3zM3 7h1v1H3z" fill="#ddd" /></svg>{/if}</td>
                    <td>{f[0]}</td>
                    {#if i === 5}
                      <td class="sel"><span class="pick"><select aria-label="Тип данных" bind:value={typeValue}><option>Дата и время</option><option>Короткий текст</option></select><span class="arr"><svg width="8" height="5" viewBox="0 0 8 5"><path d="M.5.500L4 4 7.500.500" stroke="#444" fill="none" /></svg></span></span></td>
                    {:else}<td>{f[1]}</td>{/if}
                    <td></td>
                  </tr>
                {/each}
                {#each blanks as _}<tr><td class="rs"></td><td></td><td></td><td></td></tr>{/each}
              </tbody>
            </table>
          </div>
          <div class="gbar">
            <div class="ar"><svg width="7" height="4" viewBox="0 0 7 4"><path d="M3.500 0L7 4H0z" fill="#666" /></svg></div>
            <div class="gth"></div>
            <div class="ar end"><svg width="7" height="4" viewBox="0 0 7 4"><path d="M3.500 4L7 0H0z" fill="#666" /></svg></div>
          </div>
        </div>
        <div class="pt">Свойства поля</div>
        <div class="lower">
          <div class="pcol">
            <div class="ptabs"><button class="on">Общие</button><button>Подстановка</button></div>
            <div class="panel">
              <table class="props">
                <colgroup><col class="pk" /><col /></colgroup>
                <tbody>
                  <tr><th><label for="fmt">Формат поля</label></th><td class="ed"><div><input id="fmt" value="" /><button aria-label="Список форматов"><svg width="8" height="5" viewBox="0 0 8 5"><path d="M.5.500L4 4 7.500.500" stroke="#333" stroke-width="1.500" fill="none" /></svg></button></div>
                    <ul role="listbox" aria-label="Форматы">
                      {#each formats as f, i}<li role="option" aria-selected={i === chosen} class:on={i === chosen}><span>{f[0]}</span><span>{f[1]}</span></li>{/each}
                    </ul></td></tr>
                  {#each props as p}<tr><th>{p[0]}</th><td>{p[1]}</td></tr>{/each}
                </tbody>
              </table>
            </div>
          </div>
          <p class="help">Формат вывода значений данного поля.<br />Выберите стандартный формат или<br />создайте новый. Для получения справки по<br />форматам нажмите клавишу F1.</p>
        </div>
      </main>
    </div>

    <footer>
      <span>Конструктор.&nbsp; F6 = переключение окон.&nbsp; F1 = справка.</span>
      <span class="num-l">Num Lock</span>
      <button aria-label="Режим таблицы"><svg width="14" height="13" viewBox="0 0 14 13"><path d="M.5.500h13v12H.5zM0 3.500h14M4.500 0v13M6 6.500h3M10 6.500h2M6 9.500h3M10 9.500h2M1 6.500h2M1 9.500h2" stroke="#777" fill="none" /></svg></button>
      <button class="on" aria-label="Конструктор"><svg width="15" height="14" viewBox="0 0 15 14"><path d="M1.500 1v7h6zM1.500 10.500h12v3h-12zM4 11v1M7 11v1M10 11v1" stroke="#777" fill="none" /><path d="M14 1L7 8" stroke="#777" stroke-width="2" /></svg></button>
    </footer>
  </section>

  <!-- Taskbar -->
  <div class="taskbar">
    <button aria-label="Пуск"><svg width="16" height="16" viewBox="0 0 16 16"><path d="M0 2.300L6.800 1.300V7.600H0zM7.600 1.200L16 0v7.600H7.600zM0 8.400h6.800v6.300L0 13.700zM7.600 8.400H16V16l-8.400-1.200z" fill="#fff" /></svg></button>
    <button aria-label="Поиск"><svg width="16" height="16" viewBox="0 0 16 16"><circle cx="10" cy="6" r="5" stroke="#fff" stroke-width="1.500" fill="none" /><path d="M6.500 9.500L.5 15.500" stroke="#fff" stroke-width="1.500" /></svg></button>
    <button aria-label="Представление задач"><svg width="17" height="15" viewBox="0 0 17 15"><path d="M.5 0v2.500h10V0M.5 15v-2.500h10V15M.5 5.500h10v4.500H.5zM14.500 0v15" stroke="#fff" fill="none" /><path d="M13 4h3v3h-3z" fill="#fff" /></svg></button>
    <button class="run" aria-label="Проводник"><svg width="22" height="18" viewBox="0 0 22 18"><path d="M0 0h9l1 3h12v15H0z" fill="#e5a823" /><path d="M0 4h22v13H0z" fill="#ffd867" /><path d="M4 9h14v9h-4v-4H8v4H4z" fill="#3f9fe0" /></svg></button>
    <button class="run" aria-label="Chrome Dev"><svg width="22" height="22" viewBox="0 0 22 22"><circle cx="11" cy="11" r="11" fill="#fbc116" /><path d="M1.500 5.500A11 11 0 0 1 20.500 5.500H11z" fill="#e33b2e" /><path d="M1.500 5.500L7 14l-1 7A11 11 0 0 1 1.500 5.500z" fill="#2da94f" /><circle cx="11" cy="10" r="5" fill="#fff" /><circle cx="11" cy="10" r="4" fill="#4285f4" /><path d="M.5 14h21a11 11 0 0 1-21 0z" fill="#444" /><text x="6.500" y="19" font-size="5" fill="#fff">Dev</text></svg></button>
    <button class="cur" aria-label="Access"><svg width="24" height="22" viewBox="0 0 24 22"><path d="M6 3q9-5 18 0v16q-9 5-18 0z" fill="#b5233c" /><path d="M6 3q9-5 18 0v4q-9 4-18 0z" fill="#e8788c" /><path d="M6 9q9 4 18 0v4q-9 4-18 0z" fill="#d03a52" /><rect y="5" width="13" height="13" rx="1" fill="#a4262c" /><text x="3" y="15" font-size="10" font-weight="700" fill="#fff">A</text></svg></button>
    <div class="tray">
      <svg width="16" height="16" viewBox="0 0 16 16"><path d="M4 0h6q4 1 4 6v4l-6 6-1-3H3z" fill="#0d2a44" /><path d="M5 5l5 2.500L5 10" stroke="#cde" stroke-width="2" fill="none" /></svg>
      <svg width="16" height="16" viewBox="0 0 16 16"><path d="M0 0h15v16H0z" fill="#0c1a2c" /><circle cx="7" cy="9" r="3.500" stroke="#7fb3e6" stroke-width="2.500" fill="none" /><path d="M7 2v14M0 9h14M2 4l10 10M12 4L2 14" stroke="#7fb3e6" stroke-width="1.500" /><circle cx="7" cy="9" r="2" fill="#0c1a2c" /><path d="M10 0h6v6h-6z" fill="#e01f2c" /><path d="M11.500 5V1.500l3 3V1" stroke="#fff" fill="none" /></svg>
      <svg width="16" height="16" viewBox="0 0 16 16"><path d="M2 1l7-1 2 5-7 2z" fill="#a9c4ea" /><path d="M1 8l9-3 6 3-9 3z" fill="#e2ecfa" /><path d="M1 9l6 3 9-3v3l-9 4-6-4z" fill="#8fa8d0" /></svg>
      <svg width="16" height="16" viewBox="0 0 16 16"><circle cx="8" cy="8" r="8" fill="#d3143c" /><path d="M1 9h3l1-4 2 4 2-7v7l2-2 1 3h3M6 11l1 3" stroke="#fff" stroke-width=".6" fill="none" /></svg>
      <svg width="16" height="16" viewBox="0 0 16 16"><circle cx="8" cy="8" r="8" fill="#72b543" /><path d="M5 3l1 6q1 3 4 1L9 3M10 10q1 2 3 1M6 9l1 5" stroke="#fff" stroke-width="2" fill="none" /></svg>
      <svg width="16" height="16" viewBox="0 0 16 16"><path d="M1 15Q3 5 15 1 15 9 6 11z" fill="#a66fc0" /><path d="M1 15Q6 7 14 2" stroke="#ddb9ea" fill="none" /></svg>
      <svg width="16" height="16" viewBox="0 0 16 16"><path d="M5 2l9 2-2 5-3-1-1 6-4-2 1-4-3-2z" fill="#fff" /><path d="M7 5l2 1-1 2-2-1z" fill="#222" /></svg>
      <svg width="16" height="16" viewBox="0 0 16 16"><rect width="16" height="16" rx="1" fill="#30363a" /><path d="M5 4l7 4-7 4z" fill="#93d793" /></svg>
      <svg width="16" height="16" viewBox="0 0 16 16"><path d="M1 1l3 1 2 2 5 0 3-3 1 3-2 3v4l2 3-2 2-3-3H6l-3 3-2-2 3-3V6L1 4z" fill="#c9142a" /><circle cx="8" cy="8" r="4" fill="#f5223c" /></svg>
      <svg width="16" height="16" viewBox="0 0 16 16"><rect width="15" height="15" rx="4" fill="#4a8cff" /><path d="M3 5h6v5H3zM10 7l3-2v5l-3-2z" fill="#fff" /></svg>
      <svg width="16" height="16" viewBox="0 0 16 16"><circle cx="8" cy="8" r="7.500" fill="#2b9bd8" /><path d="M6 7h6l4 2v6H9q-4-3-3-8z" fill="#142834" /><path d="M3 6l4 2" stroke="#fff" stroke-width="2" /><text x="9" y="15" font-size="8" fill="#e8b887">4</text></svg>
      <svg width="16" height="16" viewBox="0 0 16 16"><circle cx="8" cy="8" r="8" fill="#2bc52b" /><path d="M3 5l5 2 5-2-2 3 1 3-3-2-1 4-1-4-2 0 1-2z" fill="#0d5d12" /></svg>
      <svg width="17" height="15" viewBox="0 0 17 15"><path d="M4 2.500h12.500v8H5M10 11v3M6 14h8M.5.500h4v4h-4zM2.500 5v6H5" stroke="#fff" fill="none" /></svg>
      <svg width="17" height="14" viewBox="0 0 17 14"><path d="M.5 5v4h2l4 4V1l-4 4z" stroke="#fff" fill="none" /><path d="M9 5q1.500 2 0 4" stroke="#fff" fill="none" /><path d="M11 3q3 4 0 8M14 1q4 6 0 12" stroke="#999" fill="none" /></svg>
    </div>
    <span class="lang">УКР</span>
    <time>15:49<br />07.04.2021</time>
    <button class="note" aria-label="Уведомления"><svg width="24" height="26" viewBox="0 0 24 26"><path d="M0 1h16v12H7l-3 4v-4H0z" fill="#fff" /><path d="M3 4h10M3 7h10M3 10h7" stroke="#222" /><circle cx="16" cy="17" r="7.500" fill="#333" stroke="#999" /><text x="13" y="21" font-size="11" font-weight="700" fill="#fff">7</text></svg></button>
    <i class="peek"></i>
  </div>
</div>

<style>
  :global(body) { margin: 0; }
  .desktop, .desktop * { box-sizing: border-box; }
  .desktop {
    display: grid; grid-template-columns: 525fr 1394fr; grid-template-rows: minmax(0, 1fr) 39px;
    height: 100vh; overflow: hidden; background: #1d231f;
    font-family: 'Open Sans', 'Noto Sans', sans-serif; font-size: 11px; line-height: 16px; color: #444;
  }
  button { border: 0; background: none; padding: 0; margin: 0; font: inherit; color: inherit; display: flex; align-items: center; justify-content: center; }
  input, select { font: inherit; color: inherit; border: 0; padding: 0; margin: 0; background: none; outline: 0; min-width: 0; }
  a { color: inherit; text-decoration: none; }
  svg { flex: none; display: block; }
  i { flex: none; }

  /* browser */
  .browser { display: flex; flex-direction: column; min-width: 0; min-height: 0; margin: 0 2px 0 1px; background: #fff; }
  .tabstrip { display: flex; height: 43px; background: #777; border-top: 1px solid #5c5c5c; align-items: flex-end; padding-left: 8px; }
  .tab { display: flex; align-items: center; height: 34px; }
  .tab .ttl { width: 66px; overflow: hidden; white-space: nowrap; -webkit-mask-image: linear-gradient(90deg, #000 60%, transparent 98%); mask-image: linear-gradient(90deg, #000 60%, transparent 98%); }
  .tab.on { background: #fff; border-radius: 8px 8px 0 0; width: 128px; padding-left: 12px; gap: 7px; color: #4a4d51; }
  .tab.off { width: 127px; padding-left: 11px; gap: 8px; color: #fff; border-right: 1px solid #aaa; height: 20px; margin-bottom: 7px; }
  .plus { width: 45px; height: 34px; }
  .media { height: 34px; margin-left: 48px; }
  .wins { display: flex; margin-left: auto; align-self: flex-start; height: 28px; }
  .wins button { width: 46px; }
  .navbar { display: flex; align-items: center; height: 37px; padding: 0 6px; }
  .navbar > button { width: 32px; height: 32px; flex: none; }
  .omni { flex: 1; min-width: 0; display: flex; align-items: center; gap: 12px; height: 28px; border-radius: 14px; background: #f1f3f4; padding: 0 11px 0 14px; margin: 0 6px; color: #27292c; font-size: 14px; }
  .omni input { flex: 1; }
  .omni svg:last-child { margin-left: 5px; }
  .marks { display: flex; align-items: center; height: 32px; padding: 0 15px 7px; border-bottom: 1px solid #ddd; color: #3c4043; white-space: nowrap; }
  .marks a { display: flex; align-items: center; gap: 9px; }
  .marks .more { margin-left: auto; margin-right: 10px; }
  .marks i { width: 1px; height: 16px; background: #ccc; margin-right: 12px; }
  .marks .other { margin-right: 14px; }
  .pdfbar { display: flex; align-items: center; height: 57px; background: #323639; color: #f1f1f1; padding: 0 32px 0 26px; font-family: Roboto, sans-serif; font-size: 14px; font-weight: 500; }
  .pg { display: flex; align-items: center; gap: 4px; margin-left: 89px; width: 72px; }
  .pg input { width: 24px; height: 20px; background: #191b1c; text-align: center; }
  .pdfbar i { width: 1px; height: 15px; background: #6b6e70; margin-right: 16px; }
  .pdfbar .zin { margin: 0 15px 0 24px; }
  .fit { margin-left: 5px; }
  .rot { margin-left: 17px; }
  .dl { margin-left: auto; }
  .dl + button { margin: 0 29px 0 25px; }
  .viewer { flex: 1; display: flex; min-height: 0; background: #525659; }
  .pages { flex: 1; min-width: 0; display: flex; flex-direction: column; gap: 7px; overflow: hidden; padding: 2px 4px 0 3px; }
  .page { flex: none; height: 353px; background: #fff; padding: 33px 0 0 34px; box-shadow: 0 0 4px rgba(0, 0, 0, 0.5); }
  .page.first { padding-left: 31px; }
  .vbar { width: 16px; background: #f1f1f1; display: flex; flex-direction: column; align-items: center; padding: 5px 0; }
  .track { flex: 1; width: 13px; padding-top: 373px; }
  .thumb { height: 178px; background: #c1c1c1; }

  .doc { table-layout: fixed; border-collapse: collapse; width: 0; font-family: 'Liberation Serif', serif; font-size: 7px; line-height: 8px; color: #111; }
  .doc th, .doc td { border: 1px solid #15131a; padding: 1px 0 0 1px; vertical-align: top; overflow: hidden; white-space: nowrap; text-align: left; }
  .doc th { text-align: center; background: #b1a0c7; color: #14101c; padding: 0; }
  .doc .h1 { height: 42px; }
  .doc .h2 { height: 12px; }
  .doc .h2 th { background: #e4dfec; line-height: 11px; }
  .doc th.low { padding-top: 9px; }
  .doc th.mid { padding-top: 5px; }
  .doc th.left { text-align: left; padding-left: 4px; }
  .doc th.low.left { padding-left: 12px; }
  .doc th.subj { text-align: left; padding-left: 14px; }
  .doc td.num, .doc th.num { background: #fabf8f; text-align: center; color: #3a2418; }
  .doc td.num { font-size: 8px; padding-left: 0; }
  .ln { display: block; white-space: pre; }
  .desc { font-size: 6px; }
  .desc b { font-size: 7px; color: #000; }
  .p7 .ln { line-height: 7px; }
  .p8 { font-size: 7px; }
  .p8.small { font-size: 6px; }
  .p9 .ln { line-height: 10px; }

  /* database window */
  .access { display: flex; flex-direction: column; min-width: 0; min-height: 0; border-left: 1px solid #a4373a; border-bottom: 1px solid #a4373a; background: #fff; }
  header { position: relative; background: #a4373a; color: #fff; height: 65px; flex: none; white-space: nowrap; }
  .sea { position: absolute; right: 0; top: 0; }
  .titlerow { position: relative; display: flex; height: 35px; }
  .qat { display: flex; align-items: center; flex: 0 0 568px; padding: 2px 0 0 21px; min-width: 0; }
  .save { margin-right: 13px; }
  .wh { margin: 0 10px 0 4px; }
  .dim { margin: 0 14px 0 3px; color: #c05f61; }
  .wt { margin-left: 20px; }
  .ctx { width: 119px; margin-top: 2px; background: #832b2e; color: #f3b9bb; text-align: center; line-height: 33px; }
  .acct { display: flex; align-items: center; gap: 14px; margin-left: auto; height: 33px; }
  .acct b { width: 24px; height: 24px; border-radius: 50%; background: #d2d2d2; color: #666; font-weight: 400; text-align: center; line-height: 24px; }
  .awins { display: flex; height: 32px; margin-left: 12px; }
  .awins button { width: 46px; }
  .tabs { position: relative; display: flex; height: 30px; }
  .tabs button { flex: none; padding-top: 1px; }
  .t1 { width: 59px; } .t2 { width: 70px; } .t3 { width: 80px; } .t4 { width: 121px; } .t5 { width: 161px; } .t6 { width: 77px; }
  .tabs .t7 { width: 119px; background: #832b2e; }
  .tabs .on { background: #f3f3f3; color: #a4373a; }
  .tabs .tell { margin-left: 16px; gap: 14px; }

  .ribbon { display: flex; height: 93px; flex: none; background: #f3f3f3; border-bottom: 1px solid #cdcdcd; color: #aaa; white-space: nowrap; }
  .sep { width: 1px; background: #bdbdbd; margin: 4px 0; flex: none; }
  .grp { display: flex; flex-direction: column; flex: none; }
  .g1 { width: 57px; } .g2 { width: 205px; } .g3 { width: 326px; } .g4 { width: 287px; } .g5 { width: 141px; } .g6 { width: 253px; }
  .gb { display: flex; flex: 1; padding-top: 3px; }
  .gl { position: relative; height: 16px; color: #333; text-align: center; }
  .g2 .gl { padding-right: 14px; }
  .g6 .gl { padding-right: 18px; }
  .launch { position: absolute; right: 3px; top: 4px; }
  .big { flex-direction: column; justify-content: flex-start; padding-top: 4px; }
  .big .ic { height: 34px; }
  .big span { display: flex; align-items: center; gap: 3px; }
  .big .ic { align-items: flex-start; }
  .big.dark { color: #333; }
  .big > .caret { margin-top: 5px; color: #666; }
  .g1 .big { width: 56px; }
  .g2 .big { width: 56px; margin: 0 2px 0 6px; }
  .g3 .big { width: 54px; margin-left: 4px; }
  .g4 .big { width: 60px; margin: 0 2px 0 8px; }
  .g5 .big { width: 50px; margin-left: 4px; }
  .stack { display: grid; grid-template-rows: repeat(3, 23px); align-content: start; }
  .stack button { justify-content: flex-start; gap: 3px; }
  .s1 { width: 139px; }
  .s3 { width: 88px; }
  .gap { width: 6px; }
  .az { display: flex; flex-direction: column; width: 8px; font-size: 8px; font-weight: 700; line-height: 8px; }
  .az + .dn { margin-left: -3px; }
  .fmt { flex: 1; padding: 3px 0 0 8px; }
  .fr { display: flex; align-items: center; height: 22px; }
  .fr i { width: 1px; height: 21px; background: #ccc; margin: 0 4px 0 3px; }
  .r2 { height: 23px; } .r3 { height: 24px; }
  .combo { height: 22px; background: #e5e5e5; border: 1px solid #c6c6c6; justify-content: flex-end; padding-right: 4px; }
  .c1 { width: 139px; } .c2 { width: 56px; border-left: 0; }
  .w22 { width: 22px; } .w34 { width: 34px; gap: 5px; } .w38 { width: 35px; gap: 6px; }
  .ch { font-size: 13px; }
  .fold { margin: auto 8px 3px auto; }

  .work { display: flex; flex: 1; min-height: 0; }
  aside { width: 208px; flex: none; padding: 0 1px 0 3px; }
  .ah { display: flex; align-items: center; height: 34px; padding-left: 4px; }
  h2 { margin: 0; font-size: 20px; font-weight: 400; line-height: 34px; color: #a4373a; white-space: nowrap; }
  .ah button { height: 32px; align-self: flex-start; }
  .ah h2 + button { margin-right: 8px; }
  .find { display: flex; height: 19px; border: 1px solid #bbb; margin-left: 1px; }
  .find input { flex: 1; padding-left: 2px; font-style: italic; }
  .find input::placeholder { color: #333; }
  .find button { width: 18px; border-left: 1px solid #bbb; }
  .sect { display: flex; justify-content: space-between; align-items: center; height: 21px; padding: 1px 11px 0 8px; font-weight: 600; font-size: 12px; }
  .obj { display: flex; align-items: center; gap: 11px; height: 22px; padding-left: 11px; margin-bottom: 2px; }
  .obj.on { background: #fdc1c5; }

  main { flex: 1; min-width: 0; display: flex; flex-direction: column; border-left: 5px solid #eee; }
  .dtabs { display: flex; justify-content: space-between; height: 24px; flex: none; background: #f2f1ef; border-bottom: 1px solid #8b93a0; padding-right: 8px; }
  .dtab { position: relative; width: 96px; height: 24px; justify-content: flex-start; }
  .tabshape { position: absolute; left: 0; top: 0; }
  .dtab span { position: relative; display: flex; align-items: center; gap: 8px; padding: 0 0 1px 7px; color: #a4373a; }
  .dtab b { font-weight: 600; }
  .design { flex: 1; display: flex; min-height: 0; border-left: 1px solid #8b93a0; }
  .gridwrap { flex: 1; overflow: hidden; min-width: 0; }
  .grid { width: 100%; table-layout: fixed; border-collapse: separate; border-spacing: 0; font-size: 13px; line-height: 17px; color: #111; }
  .k0 { width: 19px; } .k1 { width: 192px; } .k2 { width: 160px; }
  .grid td, .grid th { height: 19px; padding: 0 0 0 3px; border-right: 1px solid #d0d7e5; border-bottom: 1px solid #d0d7e5; white-space: nowrap; }
  .grid th { background: #dfe2e6; font-weight: 400; color: #444; text-align: center; }
  .grid th.act { background: linear-gradient(#ffd65c, #ffe96a); }
  .grid .rs { background: #dfe2e6; padding: 0 0 0 2px; border-right-color: #9aa3ae; border-bottom-color: #c3cbd6; }
  .grid th.rs { padding-left: 4px; }
  .grid td.rs { vertical-align: top; }
  .grid .rs.cur { background: #ffd65c; }
  .grid td.sel { padding: 0; border: 0; }
  .pick { display: flex; height: 19px; border: 2px solid #f3a9ae; padding-left: 1px; }
  .pick select { flex: 1; appearance: none; height: 15px; line-height: 15px; }
  .arr { width: 17px; border: 1px solid #aaa; background: #e1e1e1; display: flex; align-items: center; justify-content: center; }
  .gbar { width: 18px; background: #cfcfcf; display: flex; flex-direction: column; padding: 2px 1px 2px 2px; border-left: 1px solid #d5dae2; }
  .ar { height: 15px; background: #fff; border: 1px solid #aaa; display: flex; align-items: center; justify-content: center; }
  .gth { height: 16px; background: #fff; border: 1px solid #aaa; }
  .ar.end { margin-top: auto; }
  .pt { text-align: center; height: 23px; flex: none; }
  .lower { display: flex; height: 244px; flex: none; padding-left: 9px; }
  .pcol { flex: 896; min-width: 0; }
  .ptabs { display: flex; align-items: flex-end; height: 20px; color: #222; }
  .ptabs button { height: 18px; border: 1px solid #ddd; border-bottom: 0; background: #f0f0f0; width: 73px; border-left: 0; padding-top: 2px; }
  .ptabs .on { width: 78px; height: 20px; background: #fff; border-left: 1px solid #ddd; padding-top: 0; }
  .panel { height: 216px; border: 1px solid #ddd; padding: 2px 2px 0; }
  .props { width: 100%; table-layout: fixed; border-collapse: separate; border-spacing: 0; border-top: 1px solid #bbb; border-left: 1px solid #bbb; line-height: 14px; }
  .pk { width: 132px; }
  .props th, .props td { position: relative; height: 15px; padding: 0 0 0 2px; border-right: 1px solid #bbb; border-bottom: 1px solid #bbb; white-space: nowrap; overflow: hidden; font-weight: 400; text-align: left; }
  .props th { padding-left: 1px; }
  .props td.ed { overflow: visible; }
  .ed div { display: flex; height: 14px; border-left: 1px solid #000; }
  .ed input { flex: 1; }
  .ed div button { width: 17px; border: 1px solid #1f7ac4; background: #e5f1fb; padding-top: 4px; }
  .ed ul { position: absolute; z-index: 2; left: 1px; right: 0; top: 13px; margin: 0; padding: 0; list-style: none; background: #fff; border: 1px solid #666; }
  .ed li { display: flex; height: 14px; line-height: 14px; }
  .ed li span { overflow: hidden; }
  .ed li span:first-child { width: 143px; padding-left: 3px; border-right: 1px solid #ccc; }
  .ed li span:last-child { padding-left: 3px; }
  .ed li.on { background: #000; color: #d8d8d8; }
  .ed li.on span { border-color: #666; }
  .help { flex: 267; margin: 93px 0 0; padding-right: 8px; text-align: center; line-height: 13px; white-space: nowrap; }

  footer { display: flex; align-items: center; height: 22px; flex: none; background: #f3f3f3; border-top: 1px solid #c6c6c6; padding: 0 12px 0 7px; color: #333; }
  .num-l { margin-left: auto; margin-right: 18px; }
  footer button { width: 40px; height: 21px; }
  footer .on { background: #c6c6c6; }

  .taskbar { grid-column: 1 / -1; display: flex; align-items: stretch; color: #fff; background: linear-gradient(90deg, #1c2421 0, #1c241f 30%, #1d2720 38%, #454444 42%, #444142 58%, #3a3837 64%, #33302f 69%, #221f1e 77%, #1d211d 82%, #1c231e 100%); }
  .taskbar > button { width: 48px; border-bottom: 2px solid transparent; }
  .taskbar > .run { width: 40px; margin: 0 2px 0 7px; border-color: #76b9ed; }
  .taskbar > .cur { margin-left: 3px; background: #4e5351; border-color: #76b9ed; }
  .tray { display: flex; align-items: center; gap: 8px; margin-left: auto; }
  .lang { width: 40px; text-align: center; align-self: center; }
  time { width: 62px; text-align: center; line-height: 18px; align-self: center; }
  .taskbar > .note { width: 50px; }
  .peek { width: 1px; background: #666; margin-right: 3px; }
</style>
